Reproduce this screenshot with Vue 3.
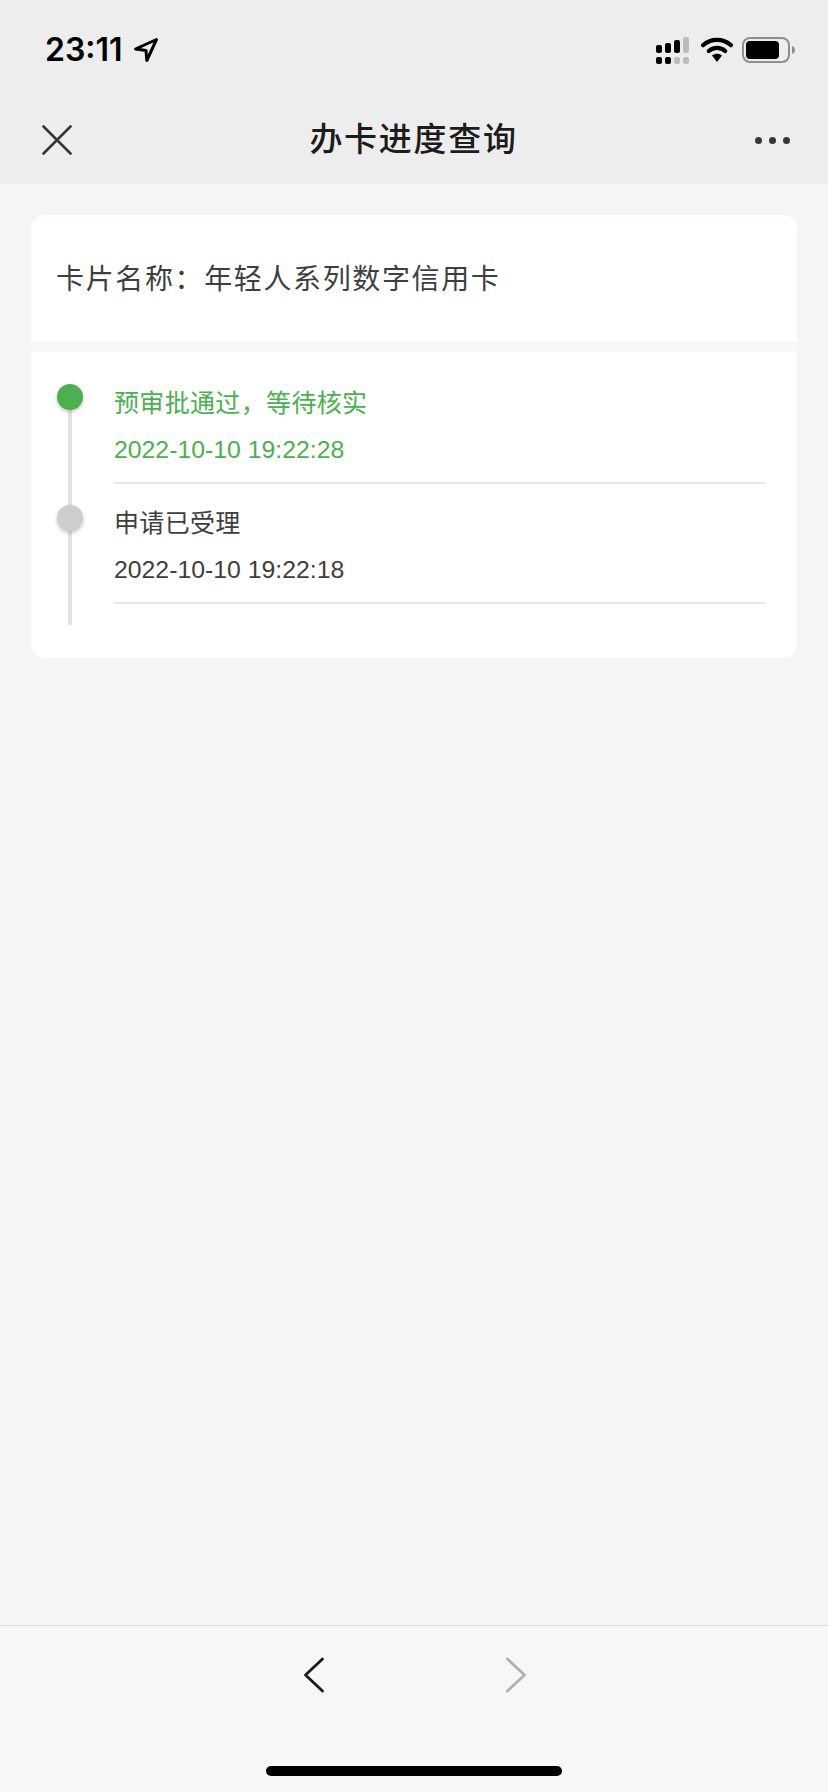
<template>
  <div class="page">
    <div class="status">
      <div class="status-left">
        <span class="time">23:11</span>
        <svg class="loc" width="26" height="26" viewBox="0 0 26 26"><path d="M23.5 2.5 2.5 12 L13 13.500 L13.800 23.5 Z" fill="none" stroke="#000" stroke-width="3" stroke-linejoin="round"/></svg>
      </div>
      <div class="status-right">
        <svg width="34" height="27" viewBox="0 0 34 27" class="sig">
          <rect x="0" y="8" width="6" height="8" rx="2" fill="#000"/>
          <rect x="9" y="6" width="6" height="10" rx="2" fill="#000"/>
          <rect x="18" y="3" width="6" height="13" rx="2" fill="#000"/>
          <rect x="27" y="0" width="6" height="16" rx="2" fill="#bdbdbd"/>
          <rect x="0" y="20" width="6" height="7" rx="2" fill="#000"/>
          <rect x="9" y="20" width="6" height="7" rx="2" fill="#000"/>
          <rect x="18" y="20" width="6" height="7" rx="2" fill="#bdbdbd"/>
          <rect x="27" y="20" width="6" height="7" rx="2" fill="#bdbdbd"/>
        </svg>
        <svg width="32" height="26" viewBox="0 0 32 26" class="wifi">
          <path d="M2 8.2 C10 1 22 1 30 8.2" fill="none" stroke="#000" stroke-width="4.2" stroke-linecap="round"/>
          <path d="M7.8 14 C12.5 9.8 19.5 9.8 24.2 14" fill="none" stroke="#000" stroke-width="4.2" stroke-linecap="round"/>
          <path d="M11 18.5 C14 16 18 16 21 18.5 L16 25 Z" fill="#000"/>
        </svg>
        <svg width="54" height="26" viewBox="0 0 54 26" class="batt">
          <rect x="1" y="1" width="46" height="24" rx="7" fill="none" stroke="#8e8e8e" stroke-width="2"/>
          <rect x="4" y="4" width="33" height="18" rx="4" fill="#000"/>
          <path d="M50 9 C52.500 10 53 11.500 53 13 C53 14.500 52.500 16 50 17 Z" fill="#8e8e8e"/>
        </svg>
      </div>
    </div>
    <div class="nav">
      <svg class="close" width="30" height="30" viewBox="0 0 30 30"><path d="M1.500 1.500 28.500 28.500 M28.500 1.500 1.500 28.500" stroke="#383838" stroke-width="2.600" stroke-linecap="round"/></svg>
      <div class="title">办卡进度查询</div>
      <div class="more"><i></i><i></i><i></i></div>
    </div>
    <main class="main">
      <section class="card">
        <div class="name">{{ cardName }}</div>
        <div class="timeline">
          <div class="line"></div>
          <div v-for="(s, i) in steps" :key="i" class="item" :class="{ active: s.active }">
            <span class="dot"></span>
            <div class="item-title">{{ s.title }}</div>
            <div class="item-date">{{ s.date }}</div>
          </div>
        </div>
      </section>
    </main>
    <footer class="foot">
      <div class="arrows">
        <svg width="22" height="36" viewBox="0 0 22 36"><path d="M19.500 2 2.500 18 19.500 34" fill="none" stroke="#1a1a1a" stroke-width="2.800" stroke-linecap="round" stroke-linejoin="round"/></svg>
        <svg width="22" height="36" viewBox="0 0 22 36"><path d="M2.500 2 19.500 18 2.500 34" fill="none" stroke="#b0b0b0" stroke-width="2.800" stroke-linecap="round" stroke-linejoin="round"/></svg>
      </div>
      <div class="home"></div>
    </footer>
  </div>
</template>

<script setup>
const cardName = '卡片名称\uFF1A年轻人系列数字信用卡'
const steps = [
  { title: '预审批通过\uFF0C等待核实', date: '2022-10-10 19:22:28', active: true },
  { title: '申请已受理', date: '2022-10-10 19:22:18', active: false },
]
</script>

<style>
html, body { margin: 0; padding: 0; }
</style>

<style scoped>
.page {
  width: 828px;
  height: 1792px;
  display: flex;
  flex-direction: column;
  background: #f4f5f7;
  font-family: "Liberation Sans", "Noto Sans CJK SC", sans-serif;
  color: #3e3e3e;
  overflow: hidden;
}
.status {
  height: 88px;
  flex: none;
  box-sizing: border-box;
  background: #ededed;
  display: flex;
  justify-content: space-between;
  padding: 37px 32px 0 45px;
}
.status-left {
  display: flex;
  align-items: flex-start;
  gap: 10px;
}
.time {
  font-family: Inter, sans-serif;
  font-weight: 600;
  font-size: 32px;
  line-height: 26px;
  letter-spacing: 0;
  color: #000;
}
.status-right {
  display: flex;
  align-items: flex-start;
  gap: 9px;
}
.sig { margin-right: 2px; }
.nav {
  height: 96px;
  flex: none;
  box-sizing: border-box;
  background: #ededed;
  display: grid;
  grid-template-columns: 1fr auto 1fr;
  align-items: center;
  padding: 8px 38px 0 42px;
}
.title {
  font-size: 33px;
  font-weight: 500;
  letter-spacing: 1.700px;
  color: #1c1c1c;
  line-height: 44px;
  margin-right: 5px;
}
.more {
  justify-self: end;
  display: flex;
  gap: 7px;
}
.more i {
  width: 7px;
  height: 7px;
  border-radius: 50%;
  background: #383838;
}
.main {
  flex: 1;
  padding: 31px 31px 0;
}
.card {
  background: #fff;
  border-radius: 14px;
  overflow: hidden;
}
.name {
  height: 137px;
  box-sizing: border-box;
  padding: 0 25px 4px;
  display: flex;
  align-items: center;
  font-size: 28px;
  letter-spacing: 1.630px;
  border-bottom: 10px solid #f8f8f9;
}
.timeline {
  position: relative;
  padding: 12px 32px 54px 83px;
}
.line {
  position: absolute;
  left: 37px;
  top: 45px;
  width: 4px;
  height: 228px;
  background: #e2e2e2;
}
.item {
  position: relative;
  padding: 19px 0 12px;
  border-bottom: 2px solid #e8e8e8;
}
.dot {
  position: absolute;
  left: -57px;
  top: 20px;
  width: 26px;
  height: 26px;
  border-radius: 50%;
  background: #cdcdcd;
  box-shadow: 0 2px 4px rgba(0, 0, 0, 0.22);
}
.item + .item .dot { top: 21px; }
.active .dot { background: #4caf50; }
.item-title, .item-date {
  font-size: 25px;
  line-height: 40px;
}
.item-title { letter-spacing: 0.340px; }
.item-date {
  margin-top: 7px;
  font-size: 24.800px;
}
.active .item-title, .active .item-date { color: #4caf50; }
.foot {
  height: 167px;
  flex: none;
  box-sizing: border-box;
  background: #f7f7f7;
  border-top: 1px solid #dcdcde;
  display: flex;
  flex-direction: column;
  align-items: center;
}
.arrows {
  display: flex;
  gap: 180px;
  margin-top: 31px;
  margin-left: 1px;
}
.home {
  width: 296px;
  height: 10px;
  border-radius: 5px;
  background: #000;
  margin-top: 73px;
}
</style>
